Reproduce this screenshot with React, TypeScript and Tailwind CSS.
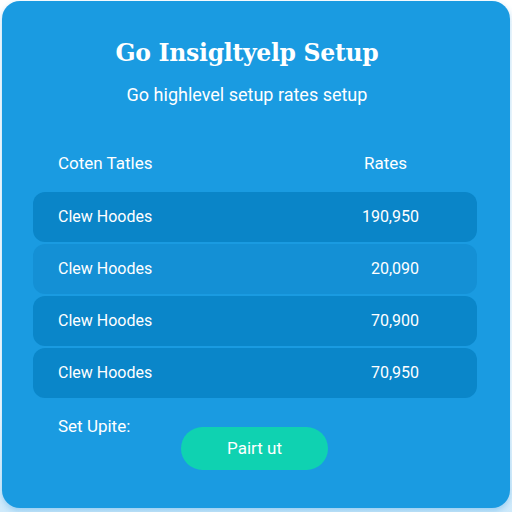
const rows = [
  { name: 'Clew Hoodes', rate: '190,950', tone: 'bg-[#0a85c8]' },
  { name: 'Clew Hoodes', rate: '20,090', tone: 'bg-[#1490d5]' },
  { name: 'Clew Hoodes', rate: '70,900', tone: 'bg-[#0a86c9]' },
  { name: 'Clew Hoodes', rate: '70,950', tone: 'bg-[#0a86c9]' },
]

export default function App() {
  return (
    <div className="h-[512px] w-[512px] bg-gradient-to-b from-white from-80% to-[#cfeafb] px-[2px] pt-px font-['Roboto','Liberation_Sans',sans-serif]">
      <div className="h-[507px] rounded-[18px] bg-[#1a9be1] text-white shadow-[0_3px_6px_rgba(80,170,230,0.45)]">
        <h1 className="pr-[18px] pt-[36px] text-center font-['DejaVu_Serif',serif] text-[23.5px] font-bold leading-8 tracking-[-0.3px]">
          Go Insigltyelp Setup
        </h1>
        <p className="mt-[14px] pr-[18px] text-center text-[18px] leading-6">Go highlevel setup rates setup</p>

        <div className="mt-[44px] flex items-center justify-between pl-[56px] pr-[103px] text-[17px] leading-6">
          <span>Coten Tatles</span>
          <span>Rates</span>
        </div>

        <div className="ml-[31px] mr-[33px] mt-[17px] flex flex-col gap-[2px]">
          {rows.map((row, i) => (
            <div
              key={i}
              className={`flex h-[50px] items-center justify-between rounded-[12px] pl-[25px] pr-[58px] text-[16px] ${row.tone}`}
            >
              <span>{row.name}</span>
              <span>{row.rate}</span>
            </div>
          ))}
        </div>

        <div className="mt-[16px] px-[56px] text-[17px] leading-6">Set Upite:</div>
        <div className="-mt-[11px] flex pl-[179px]">
          <button className="h-[43px] w-[147px] rounded-full bg-[#0fd2b1] text-[17px] text-white">
            Pairt ut
          </button>
        </div>
      </div>
    </div>
  )
}
